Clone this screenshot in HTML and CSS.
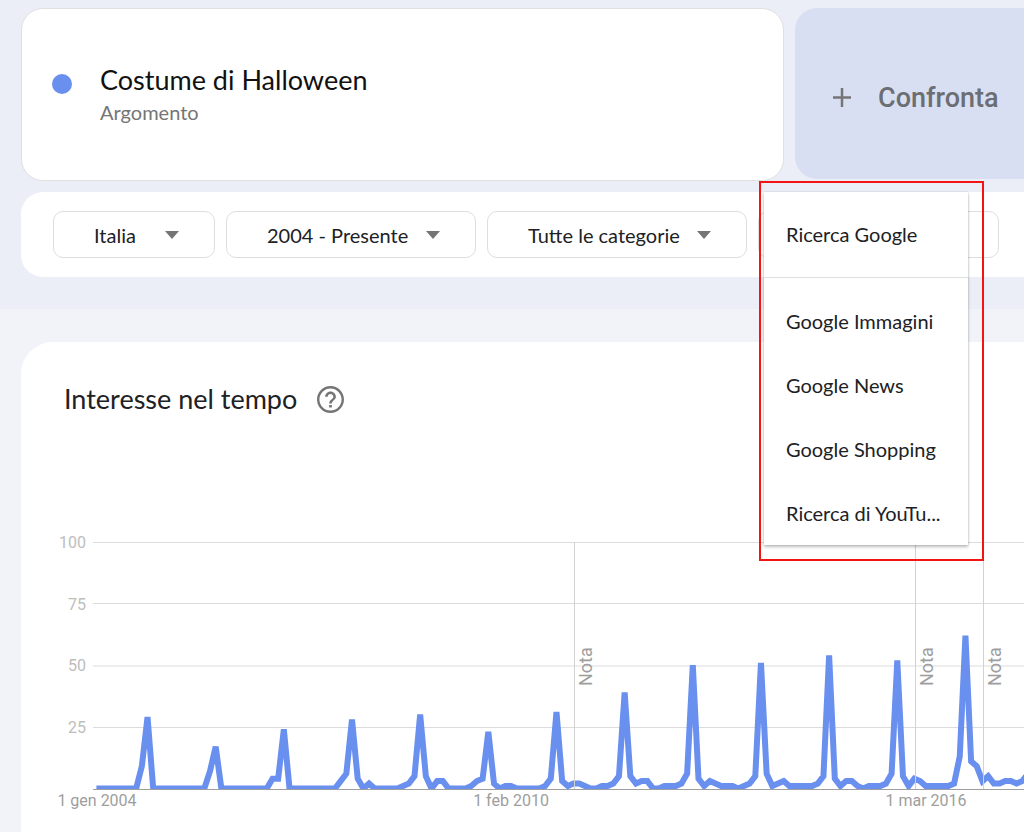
FILE: index.html
```html
<!DOCTYPE html>
<html lang="it">
<head>
<meta charset="utf-8">
<meta name="viewport" content="width=device-width, initial-scale=1">
<title>Costume di Halloween - Esplora</title>
<link rel="stylesheet" href="styles.css">
</head>
<body>
<header class="explore">
  <div class="terms">
    <section class="term">
      <span class="term-dot"></span>
      <div>
        <h1 class="term-name">Costume di Halloween</h1>
        <p class="term-type">Argomento</p>
      </div>
    </section>
    <button class="compare" type="button">
      <svg class="plus" viewBox="0 0 20 20" aria-hidden="true"><path d="M10 0v19M1 9.500h18"/></svg>
      <span>Confronta</span>
    </button>
  </div>
  <div class="filters">
    <div class="filter filter-place">
      <select class="filter-select" aria-label="Area geografica"><option>Italia</option></select>
      <svg class="arrow" viewBox="0 0 14 8" aria-hidden="true"><path d="M0 0h14L7 8z"/></svg>
    </div>
    <div class="filter filter-time">
      <select class="filter-select" aria-label="Periodo"><option>2004 - Presente</option></select>
      <svg class="arrow" viewBox="0 0 14 8" aria-hidden="true"><path d="M0 0h14L7 8z"/></svg>
    </div>
    <div class="filter filter-category">
      <select class="filter-select" aria-label="Categoria"><option>Tutte le categorie</option></select>
      <svg class="arrow" viewBox="0 0 14 8" aria-hidden="true"><path d="M0 0h14L7 8z"/></svg>
    </div>
    <div class="filter filter-source">
      <button class="filter-select" type="button" aria-haspopup="true" aria-expanded="true" aria-label="Tipo di ricerca"></button>
      <div class="highlight">
        <div class="menu">
          <button class="menu-item menu-current" type="button">Ricerca Google</button>
          <button class="menu-item" type="button">Google Immagini</button>
          <button class="menu-item" type="button">Google News</button>
          <button class="menu-item" type="button">Google Shopping</button>
          <button class="menu-item" type="button">Ricerca di YouTu...</button>
        </div>
      </div>
    </div>
  </div>
</header>
<main class="content">
  <section class="card">
    <div class="card-head">
      <h2 class="card-title">Interesse nel tempo</h2>
      <button class="help" type="button" aria-label="Guida">
        <svg viewBox="2 2 20 20" aria-hidden="true"><path d="M11 18h2v-2h-2v2zm1-16C6.480 2 2 6.480 2 12s4.480 10 10 10 10-4.480 10-10S17.520 2 12 2zm0 18.200c-4.520 0-8.200-3.680-8.200-8.200S7.480 3.800 12 3.800s8.200 3.680 8.200 8.200-3.680 8.200-8.200 8.200zm0-14.200c-2.210 0-4 1.790-4 4h1.900c0-1.150.95-2.100 2.100-2.100s2.100.95 2.100 2.100c0 2-3 1.750-3 5h1.900c0-2.250 3-2.500 3-5 0-2.210-1.790-4-4-4z"/></svg>
      </button>
    </div>
    <svg class="chart" viewBox="0 0 1003 290" preserveAspectRatio="xMinYMin slice" role="img" aria-label="Interesse nel tempo">
      <defs><clipPath id="plot"><rect x="72" y="0" width="931" height="267"/></clipPath></defs>
      <path class="grid" d="M72 20.500H1003M72 81.500H1003M72 144H1003M72 205.500H1003"/>
      <g class="y-labels">
        <text x="65" y="26">100</text>
        <text x="65" y="88">75</text>
        <text x="65" y="149">50</text>
        <text x="65" y="211">25</text>
      </g>
      <g clip-path="url(#plot)">
        <polyline class="trend" transform="translate(75.400 266.500) scale(5.680 -2.465)" points="0,0 7,0 8,9 9,29 10,0 19,0 20,7 21,17 22,0 30,0 31,4 32,4 33,24 34,0 42,0 43,3 44,6 45,28 46,4 47,0 48,2 49,0 53,0 54,1 55,2 56,5 57,30 58,5 59,0 60,3 61,3 62,0 65,0 66,1 67,3 68,4 69,23 70,2 71,0 72,1 73,1 74,0 78,0 79,1 80,4 81,31 82,3 83,1 84,2 85,2 86,1 87,0 88,0 89,1 90,1 91,2 92,5 93,39 94,5 95,2 96,3 97,3 98,0 99,0 100,1 102,1 103,2 104,6 105,50 106,4 107,1 108,3 109,2 110,1 112,1 113,0 114,1 115,2 116,5 117,51 118,6 119,1 120,2 121,3 122,1 126,1 127,2 128,5 129,54 130,4 131,1 132,3 133,3 134,1 135,0 136,1 138,1 139,2 140,6 141,52 142,5 143,1 144,4 145,3 146,1 150,1 151,2 152,13 153,62 154,11 155,9 156,3 157,5 158,2 159,2 160,3 161,3 162,2 163,3 164,6"/>
      </g>
      <path class="axis" d="M72 267.500H1003"/>
      <path class="note-line" d="M553.500 20V267M894.500 20V267M962.500 20V267"/>
      <g class="notes">
        <text transform="translate(571 164) rotate(-90)">Nota</text>
        <text transform="translate(912 164) rotate(-90)">Nota</text>
        <text transform="translate(980 164) rotate(-90)">Nota</text>
      </g>
      <g class="x-labels">
        <text x="76" y="284">1 gen 2004</text>
        <text x="490" y="284">1 feb 2010</text>
        <text x="905" y="284">1 mar 2016</text>
      </g>
    </svg>
  </section>
</main>
</body>
</html>
```
FILE: styles.css
```css
* { box-sizing: border-box; }

body {
  margin: 0;
  min-height: 100vh;
  display: flex;
  flex-direction: column;
  background: #f2f3f9;
  color: #202124;
  font-family: "Lato", "Liberation Sans", sans-serif;
  overflow-x: hidden;
}

h1, h2, p { margin: 0; font-weight: 400; }

button, select {
  font: inherit;
  color: inherit;
  background: none;
  border: 0;
  padding: 0;
  cursor: pointer;
}

.explore {
  display: flex;
  flex-direction: column;
  gap: 11px;
  padding: 8px 0 32px 21px;
  background: #ebeef7;
}

.terms { display: flex; align-items: flex-start; gap: 11px; }

.term {
  display: flex;
  align-items: center;
  gap: 28px;
  flex: 0 0 763px;
  height: 173px;
  padding: 0 30px 2px;
  background: #fff;
  border: 1px solid #e0e0e0;
  border-radius: 22px;
}

.term-dot {
  width: 20px;
  height: 20px;
  margin-bottom: 20px;
  border-radius: 50%;
  background: #698fef;
}

.term-name { font-size: 27px; line-height: 36px; color: #111; }
.term-type { font-size: 20px; line-height: 28px; color: #757575; }

.compare {
  display: flex;
  align-items: center;
  gap: 26px;
  flex: 1;
  height: 171px;
  padding: 8px 0 0 37px;
  border-radius: 22px 0 0 22px;
  background: #d9dff2;
  color: #6b6e73;
  font-family: "Roboto", sans-serif;
  font-size: 27px;
  font-weight: 500;
  white-space: nowrap;
}

.plus { width: 20px; height: 20px; fill: none; stroke: #757575; stroke-width: 2.500; }

.filters {
  display: flex;
  gap: 11px;
  padding: 19px 25px 19px 32px;
  border-radius: 22px 0 0 22px;
  background: #fff;
}

.filter {
  position: relative;
  display: grid;
  align-items: center;
  font-size: 20px;
}

.filter-place { flex: 0 1 162px; }
.filter-time { flex: 0 1 250px; }
.filter-category { flex: 0 1 260px; }
.filter-source { flex: 0 1 241px; }

.filter-select {
  grid-area: 1 / 1;
  appearance: none;
  width: 100%;
  height: 47px;
  padding-left: 40px;
  border: 1px solid #dedede;
  border-radius: 10px;
}

.arrow {
  grid-area: 1 / 1;
  justify-self: end;
  width: 14px;
  height: 8px;
  margin-right: 36px;
  fill: #757575;
  pointer-events: none;
}

/* Open search-type menu and its red frame */
.highlight {
  position: absolute;
  z-index: 2;
  top: -30px;
  left: 1px;
  width: 225px;
  padding: 9px 14px 14px 3px;
  border: 2px solid #f51414;
}

.menu {
  display: flex;
  flex-direction: column;
  background: #fff;
  box-shadow: 0 2px 3px rgba(0, 0, 0, .25), 0 0 2px rgba(0, 0, 0, .15);
}

.menu-item { height: 64px; padding: 0 0 1px 22px; text-align: left; white-space: nowrap; }
.menu-item:nth-child(2) { margin-top: 11px; }
.menu-current { height: 86px; border-bottom: 1px solid #dedede; }

.content { flex: 1; display: flex; padding: 33px 0 0 21px; }

.card {
  flex: 1;
  min-width: 0;
  display: flex;
  flex-direction: column;
  gap: 104px;
  background: #fff;
  border-radius: 32px 0 0 0;
}

.card-head { display: flex; align-items: center; gap: 20px; padding: 38px 0 0 43px; }
.card-title { font-size: 27px; line-height: 38px; }
.help { display: flex; width: 27px; height: 27px; }
.help svg { width: 27px; height: 27px; fill: #757575; }

.chart { display: block; width: 100%; height: 290px; font-family: "Roboto", sans-serif; font-size: 16px; }
.grid { stroke: #dcdcdc; stroke-width: 1; }
.axis { stroke: #9e9e9e; stroke-width: 1; }
.note-line { stroke: #d2d2d2; stroke-width: 1; }
.trend { fill: none; stroke: #698fef; stroke-width: 6; vector-effect: non-scaling-stroke; }
.y-labels { fill: #bdbdbd; text-anchor: end; }
.x-labels { fill: #9e9e9e; text-anchor: middle; }
.notes { fill: #9e9e9e; font-size: 18px; }
```
